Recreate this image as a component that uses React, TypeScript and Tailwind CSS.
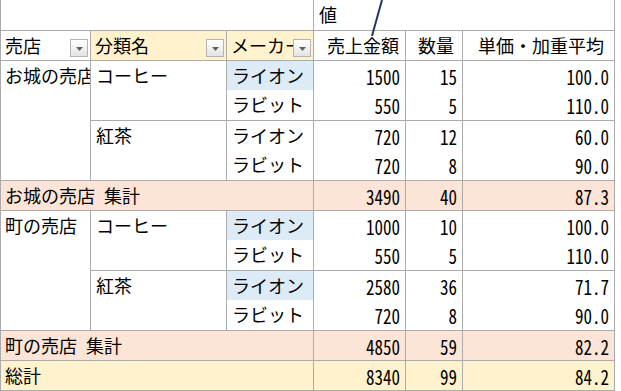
import React from "react";

type Leaf = { maker: string; blue?: boolean; amt: number; qty: number; price: string };
type Cat = { name: string; rows: Leaf[] };
type Store = { name: string; cats: Cat[]; amt: number; qty: number; price: string };

const stores: Store[] = [
  {
    name: "お城の売店",
    cats: [
      {
        name: "コーヒー",
        rows: [
          { maker: "ライオン", blue: true, amt: 1500, qty: 15, price: "100.0" },
          { maker: "ラビット", amt: 550, qty: 5, price: "110.0" },
        ],
      },
      {
        name: "紅茶",
        rows: [
          { maker: "ライオン", amt: 720, qty: 12, price: "60.0" },
          { maker: "ラビット", amt: 720, qty: 8, price: "90.0" },
        ],
      },
    ],
    amt: 3490,
    qty: 40,
    price: "87.3",
  },
  {
    name: "町の売店",
    cats: [
      {
        name: "コーヒー",
        rows: [
          { maker: "ライオン", blue: true, amt: 1000, qty: 10, price: "100.0" },
          { maker: "ラビット", amt: 550, qty: 5, price: "110.0" },
        ],
      },
      {
        name: "紅茶",
        rows: [
          { maker: "ライオン", blue: true, amt: 2580, qty: 36, price: "71.7" },
          { maker: "ラビット", amt: 720, qty: 8, price: "90.0" },
        ],
      },
    ],
    amt: 4850,
    qty: 59,
    price: "82.2",
  },
];

const cell = "p-0 align-top leading-[29px] overflow-hidden whitespace-nowrap border-[#ababab]";
const txt = "pl-[4px] text-left";
const num =
  "pr-[5px] text-right font-['Noto_Sans_Mono_CJK_JP','Noto_Sans_CJK_JP',monospace] text-[17px] [font-feature-settings:'hwid']";

function Num({ v }: { v: React.ReactNode }) {
  return <span className="inline-block scale-y-[1.18] translate-y-[1px]">{v}</span>;
}

function Drop() {
  return (
    <span className="absolute right-[2px] top-[8px] w-[18px] h-[18px] border border-[#b4b4b4] bg-gradient-to-b from-white to-[#e4e4e4] flex items-center justify-center">
      <svg width="7" height="4" viewBox="0 0 7 4" className="mt-[2px]">
        <path d="M0 0h7L3.5 4z" fill="#606060" />
      </svg>
    </span>
  );
}

export default function App() {
  return (
    <div className="relative w-[621px] h-[391px] bg-white overflow-hidden text-black font-['Noto_Sans_CJK_JP',sans-serif] text-[18px]">
      <table className="table-fixed border-collapse w-[614px]">
        <colgroup>
          <col className="w-[90px]" />
          <col className="w-[136px]" />
          <col className="w-[87px]" />
          <col className="w-[92px]" />
          <col className="w-[57px]" />
          <col className="w-[152px]" />
        </colgroup>
        <tbody>
          <tr className="h-[30px]">
            <td colSpan={3} className={`${cell} border-l`} />
            <td colSpan={3} className={`${cell} ${txt} pl-[5px] border-l border-r`}>
              値
            </td>
          </tr>
          <tr className="h-[30px]">
            <td className={`${cell} ${txt} relative border-t border-l border-r`}>
              売店
              <Drop />
            </td>
            <td className={`${cell} ${txt} relative bg-[#fff2cc] border-t border-r`}>
              分類名
              <Drop />
            </td>
            <td className={`${cell} ${txt} relative bg-[#fff2cc] border-t border-r`}>
              メーカー
              <Drop />
            </td>
            <td className={`${cell} text-right pr-[6px] border-t border-r`}>売上金額</td>
            <td className={`${cell} text-right pr-[8px] border-t border-r`}>数量</td>
            <td className={`${cell} text-right pr-[10px] border-t border-r`}>単価・加重平均</td>
          </tr>
          {stores.map((s) => (
            <React.Fragment key={s.name}>
              {s.cats.map((c, ci) =>
                c.rows.map((r, ri) => {
                  const top = ri === 0 ? "border-t" : "";
                  return (
                    <tr key={`${s.name}-${c.name}-${r.maker}`} className="h-[30px]">
                      {ci === 0 && ri === 0 && (
                        <td rowSpan={4} className={`${cell} ${txt} border-t border-l border-r`}>
                          {s.name}
                        </td>
                      )}
                      {ri === 0 && (
                        <td rowSpan={2} className={`${cell} ${txt} pl-[5px] border-t border-r`}>
                          {c.name}
                        </td>
                      )}
                      <td className={`${cell} ${txt} pl-[5px] border-r ${top} ${r.blue ? "bg-[#ddebf7]" : ""}`}>
                        {r.maker}
                      </td>
                      <td className={`${cell} ${num} border-r ${top}`}>
                        <Num v={r.amt} />
                      </td>
                      <td className={`${cell} ${num} border-r ${top}`}>
                        <Num v={r.qty} />
                      </td>
                      <td className={`${cell} ${num} border-r ${top}`}>
                        <Num v={r.price} />
                      </td>
                    </tr>
                  );
                })
              )}
              <tr className="h-[30px] bg-[#fce4d6]">
                <td colSpan={3} className={`${cell} ${txt} [word-spacing:5px] border-t border-l border-r`}>
                  {s.name} 集計
                </td>
                <td className={`${cell} ${num} border-t border-r`}>
                  <Num v={s.amt} />
                </td>
                <td className={`${cell} ${num} border-t border-r`}>
                  <Num v={s.qty} />
                </td>
                <td className={`${cell} ${num} border-t border-r`}>
                  <Num v={s.price} />
                </td>
              </tr>
            </React.Fragment>
          ))}
          <tr className="h-[30px] bg-[#fff2cc]">
            <td colSpan={3} className={`${cell} ${txt} border-t border-b border-l border-r`}>
              総計
            </td>
            <td className={`${cell} ${num} border-t border-b border-r`}>
              <Num v={8340} />
            </td>
            <td className={`${cell} ${num} border-t border-b border-r`}>
              <Num v={99} />
            </td>
            <td className={`${cell} ${num} border-t border-b border-r`}>
              <Num v="84.2" />
            </td>
          </tr>
        </tbody>
      </table>
      <svg className="absolute left-[368px] top-0" width="18" height="40" viewBox="0 0 18 40">
        <line x1="14" y1="0" x2="4" y2="36" stroke="#1f3864" strokeWidth="2" />
      </svg>
    </div>
  );
}
